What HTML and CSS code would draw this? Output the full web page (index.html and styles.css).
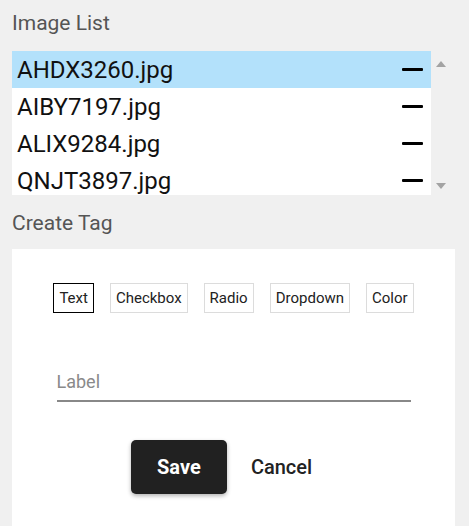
FILE: index.html
```html
<!DOCTYPE html>
<html>
<head>
<meta charset="utf-8">
<link rel="stylesheet" href="styles.css">
</head>
<body>
<div class="page">
  <h2 class="section-title">Image List</h2>
  <div class="list-wrap">
    <ul class="list">
      <li class="row selected"><span class="name">AHDX3260.jpg</span><span class="minus"></span></li>
      <li class="row"><span class="name">AIBY7197.jpg</span><span class="minus"></span></li>
      <li class="row"><span class="name">ALIX9284.jpg</span><span class="minus"></span></li>
      <li class="row"><span class="name">QNJT3897.jpg</span><span class="minus"></span></li>
    </ul>
    <div class="scrollbar">
      <span class="arrow up"></span>
      <span class="arrow down"></span>
    </div>
  </div>
  <h2 class="section-title second">Create Tag</h2>
  <div class="card">
    <div class="types">
      <button class="type active">Text</button>
      <button class="type">Checkbox</button>
      <button class="type">Radio</button>
      <button class="type">Dropdown</button>
      <button class="type">Color</button>
    </div>
    <div class="field">
      <input class="label-input" type="text" placeholder="Label">
    </div>
    <div class="actions">
      <button class="save">Save</button>
      <button class="cancel">Cancel</button>
    </div>
  </div>
</div>
</body>
</html>
```

FILE: styles.css
```css
html, body {
  margin: 0;
  padding: 0;
  background: #f0f0f0;
  font-family: Roboto, "Liberation Sans", sans-serif;
}
.page {
  padding: 0 14px 0 12px;
}
.section-title {
  margin: 0;
  font-size: 21px;
  font-weight: 400;
  color: #555;
  line-height: 24px;
  padding-top: 11px;
  height: 51px;
  box-sizing: border-box;
}
.second {
  padding-top: 16px;
  height: 54px;
}
.list-wrap {
  display: flex;
  height: 144px;
}
.list {
  list-style: none;
  margin: 0;
  padding: 0;
  width: 419px;
  background: #fff;
  overflow: hidden;
}
.row {
  height: 37px;
  flex-shrink: 0;
  display: flex;
  align-items: center;
  justify-content: space-between;
  padding: 0 8px 0 5px;
  font-size: 24px;
  color: #111;
}
.row.selected {
  background: #b3e1fb;
}
.minus {
  width: 21px;
  height: 3px;
  background: #000;
  border-radius: 1px;
}
.scrollbar {
  width: 20px;
  display: flex;
  flex-direction: column;
  justify-content: space-between;
  align-items: center;
  padding: 10px 0 6px;
}
.arrow {
  width: 0;
  height: 0;
  border-left: 5px solid transparent;
  border-right: 5px solid transparent;
}
.arrow.up {
  border-bottom: 6px solid #a3a3a3;
}
.arrow.down {
  border-top: 6px solid #a3a3a3;
}
.card {
  background: #fff;
  height: 300px;
  padding-top: 34px;
  box-sizing: border-box;
}
.types {
  display: flex;
  justify-content: center;
  gap: 16px;
}
.type {
  font-family: Roboto, "Liberation Sans", sans-serif;
  font-size: 15px;
  color: #222;
  background: #fff;
  border: 1px solid #dcdcdc;
  height: 30px;
  padding: 0 5px;
  margin: 0;
  line-height: 28px;
}
.type.active {
  border-color: #000;
}
.field {
  display: flex;
  justify-content: center;
  margin-top: 52px;
}
.label-input {
  width: 354px;
  border: none;
  border-bottom: 2px solid #888;
  font-family: Roboto, "Liberation Sans", sans-serif;
  font-size: 18px;
  padding: 6px 0 8px;
  outline: none;
  color: #333;
  background: transparent;
}
.label-input::placeholder {
  color: #8a8a8a;
}
.actions {
  display: flex;
  justify-content: center;
  align-items: center;
  margin-top: 38px;
}
.save {
  font-family: Roboto, "Liberation Sans", sans-serif;
  font-size: 20px;
  font-weight: 700;
  color: #fff;
  background: #212121;
  border: none;
  border-radius: 5px;
  width: 96px;
  height: 54px;
  box-shadow: 0 2px 4px rgba(0,0,0,0.3);
}
.cancel {
  font-family: Roboto, "Liberation Sans", sans-serif;
  font-size: 20px;
  font-weight: 500;
  color: #222;
  background: none;
  border: none;
  height: 54px;
  padding: 0 24px;
}
```
